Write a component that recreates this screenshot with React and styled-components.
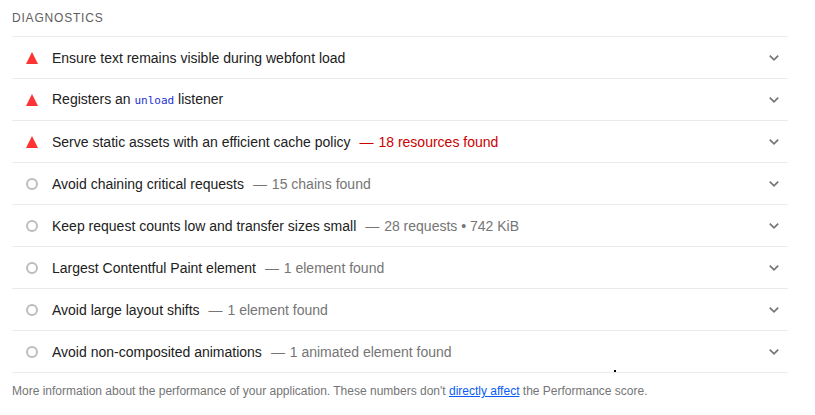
import React from 'react';
import styled, { createGlobalStyle } from 'styled-components';

const GlobalStyle = createGlobalStyle`
  * { box-sizing: border-box; }
  body { margin: 0; background: #fff; }
`;
const Page = styled.main`
  position: relative;
  width: 815px;
  height: 415px;
  padding: 0 27px 0 12px;
  overflow: hidden;
  background: #fff;
  color: #212121;
  font-family: 'Liberation Sans', Arial, sans-serif;
`;
const Heading = styled.h2`
  margin: 0;
  height: 36px;
  font-size: 12px;
  font-weight: 400;
  line-height: 36px;
  letter-spacing: 0.8px;
  color: #616161;
`;
const List = styled.div`
  border-bottom: 1px solid #ebebeb;
`;
const Row = styled.div`
  display: flex;
  align-items: center;
  height: 42px;
  padding: 0 8px 0 14px;
  border-top: 1px solid #ebebeb;
  font-size: 14px;
  line-height: 20px;
  white-space: pre;
`;
const Marker = styled.svg`
  width: 12px;
  height: 12px;
  margin-right: 14px;
  flex: none;
`;
const Title = styled.span`
  flex: 1;
  padding-bottom: ${(p) => (p.$raised ? '2px' : '0')};
`;
const Detail = styled.span`
  margin-left: 9px;
  color: ${(p) => (p.$fail ? '#c00' : '#757575')};
`;
const Dash = styled.span`
  margin-right: 1px;
`;
const Code = styled.code`
  font-family: 'DejaVu Sans Mono', monospace;
  font-size: 11px;
  line-height: 1;
  color: #1a2fd0;
`;
const Chevron = styled.svg`
  width: 12px;
  height: 12px;
  flex: none;
`;
const Footer = styled.p`
  margin: 8px 0 0;
  font-size: 12px;
  line-height: 20px;
  color: #757575;
`;
const Link = styled.a`
  color: #0a5cf5;
  text-decoration: underline;
`;
const Dot = styled.i`
  position: absolute;
  left: 614px;
  top: 370px;
  width: 2px;
  height: 2px;
  background: #000;
`;

const audits = [
  { fail: true, title: 'Ensure text remains visible during webfont load' },
  { fail: true, raised: true, title: <>Registers an <Code>unload</Code> listener</> },
  { fail: true, title: 'Serve static assets with an efficient cache policy', detail: '18 resources found' },
  { title: 'Avoid chaining critical requests', detail: '15 chains found' },
  { title: 'Keep request counts low and transfer sizes small', detail: '28 requests • 742 KiB' },
  { title: 'Largest Contentful Paint element', detail: '1 element found' },
  { title: 'Avoid large layout shifts', detail: '1 element found' },
  { title: 'Avoid non-composited animations', detail: '1 animated element found' },
];

function Audit({ fail, raised, title, detail }) {
  return (
    <Row>
      <Marker viewBox="0 0 12 12">
        {fail ? <path d="M6 0L12 12H0Z" fill="#f33" /> : <circle cx="6" cy="6" r="5" fill="none" stroke="#bdbdbd" strokeWidth="2" />}
      </Marker>
      <Title $raised={raised}>{title}{detail && <Detail $fail={fail}><Dash>—</Dash> {detail}</Detail>}</Title>
      <Chevron viewBox="0 0 12 12"><path d="M1.8 3.7L6 7.9L10.2 3.7" fill="none" stroke="#757575" strokeWidth="1.7" /></Chevron>
    </Row>
  );
}

export default function App() {
  return (
    <Page>
      <GlobalStyle />
      <Heading>DIAGNOSTICS</Heading>
      <List>{audits.map((audit, i) => <Audit key={i} {...audit} />)}</List>
      <Footer>More information about the performance of your application. These numbers don't <Link>directly affect</Link> the Performance score.</Footer>
      <Dot />
    </Page>
  );
}
